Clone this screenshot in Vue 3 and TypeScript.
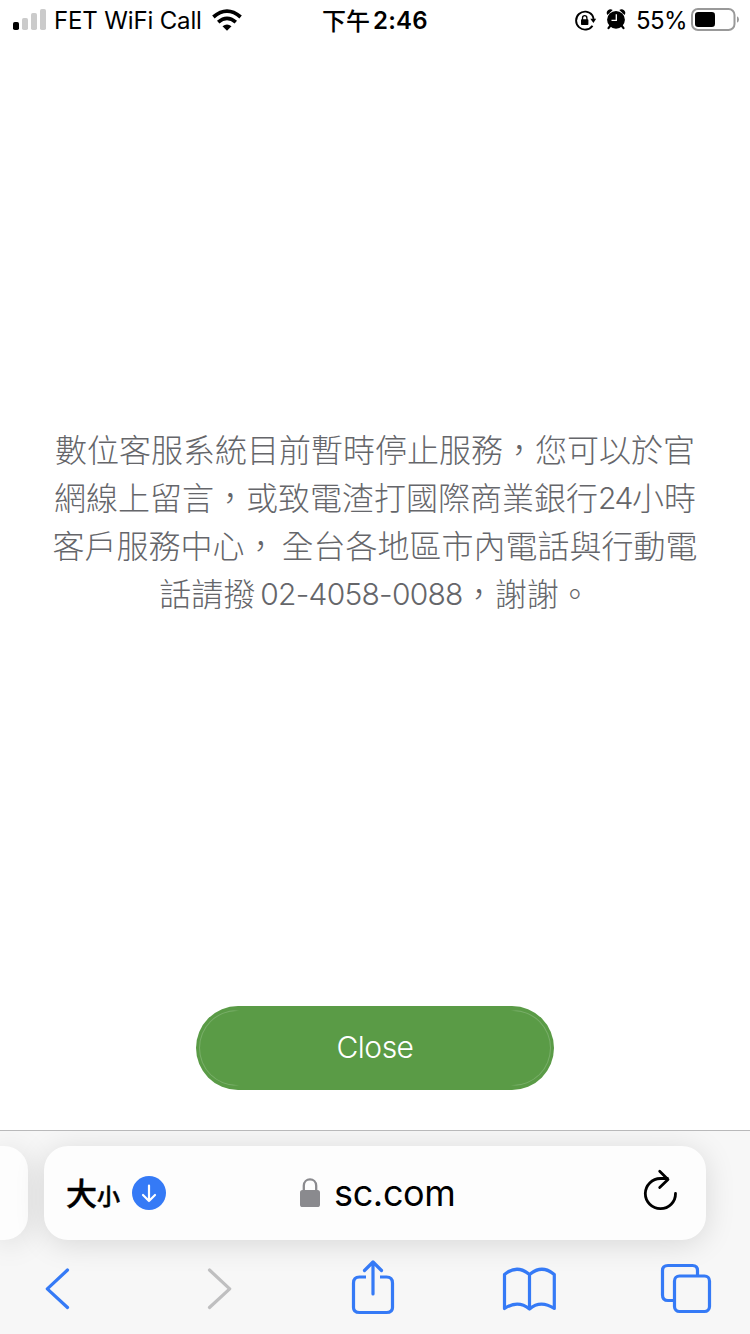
<script setup lang="ts">
interface Run {
  text: string
  kind?: 'number' | 'phone' | 'gap'
}

const message: Run[][] = [
  [{ text: '數位客服系統目前暫時停止服務，您可以於官' }],
  [{ text: '網線上留言，或致電渣打國際商業銀行' }, { text: '24', kind: 'number' }, { text: '小時' }],
  [{ text: '客戶服務中心，' }, { text: ' ', kind: 'gap' }, { text: '全台各地區市內電話與行動電' }],
  [{ text: '話請撥' }, { text: ' ', kind: 'gap' }, { text: '02-4058-0088', kind: 'phone' }, { text: '，謝謝。' }],
]
</script>

<template>
  <div class="screen">
    <header class="status">
      <div class="carrier">
        <svg class="signal" width="34" height="22" viewBox="13 9 34 22">
          <rect x="13" y="22" width="6" height="8" rx="1.8" />
          <g fill="#cbcbcb">
            <rect x="22" y="18" width="6" height="12" rx="1.8" />
            <rect x="31" y="13" width="6" height="17" rx="1.8" />
            <rect x="40" y="9" width="6" height="21" rx="1.8" />
          </g>
        </svg>
        <span class="network">FET WiFi Call</span>
        <svg class="wifi" width="30" height="22" viewBox="212 9 30 22">
          <g fill="none" stroke="#000" stroke-width="3.700">
            <path d="M213.400 17Q227 5.200 240.600 17" />
            <path d="M218.200 22.200Q227 14.600 235.800 22.200" />
          </g>
          <path d="M222.500 26.300Q227 22.700 231.500 26.300L227 30.800Z" />
        </svg>
      </div>
      <div class="clock"><span class="cjk">下午</span><span class="time">2:46</span></div>
      <div class="power">
        <svg width="52" height="26" viewBox="574 7 52 26">
          <path d="M592.300 15.200A9 9 0 1 0 592.500 25.700M592.300 15.200A9 9 0 0 1 593.600 20" fill="none" stroke="#000" stroke-width="1.900" />
          <path d="M590.300 18.700H596.200L593.400 23Z" />
          <rect x="581" y="19.300" width="7.400" height="5.700" rx=".8" />
          <path d="M582.500 20v-2.100a2.200 2.200 0 0 1 4.400 0V20" fill="none" stroke="#000" stroke-width="1.300" />
          <circle cx="616" cy="19.800" r="8.900" />
          <path d="M607.400 15a3.700 3.700 0 0 1 5.300-5zM624.600 15a3.700 3.700 0 0 0-5.300-5z" />
          <path d="m610.500 25.500-2 2.600m13-2.600 2 2.600" stroke="#000" stroke-width="2.200" stroke-linecap="round" />
          <path d="M616.300 14.300v6h-4.800" fill="none" stroke="#fff" stroke-width="1.300" />
        </svg>
        <span class="percent">55%</span>
        <svg width="50" height="26" viewBox="690 7 50 26">
          <rect x="692" y="9" width="42.500" height="21" rx="6" fill="none" stroke="#999" stroke-width="2" />
          <rect x="695" y="12" width="20" height="15" rx="3.200" />
          <path d="M737 16.200q2 1 2 3.300t-2 3.300z" fill="#999" />
        </svg>
      </div>
    </header>

    <main class="page">
      <p class="message">
        <span v-for="(line, i) in message" :key="i" class="line">
          <span v-for="(run, j) in line" :key="j" :class="run.kind">{{ run.text }}</span>
        </span>
      </p>
      <button class="close" type="button"><span>Close</span></button>
    </main>

    <footer class="browser">
      <div class="tabs">
        <div class="previous"></div>
        <div class="address">
          <span class="size"><span>大</span><small>小</small></span>
          <svg class="download" width="34" height="34" viewBox="0 0 34 34">
            <circle cx="17" cy="17" r="17" fill="#357af6" />
            <path d="M17 9.500V25m-6-6 6 6 6-6" fill="none" stroke="#fff" stroke-width="2.200" stroke-linecap="round" stroke-linejoin="round" />
          </svg>
          <svg class="lock" width="20" height="30" viewBox="300 1178 20 30">
            <rect x="300" y="1190" width="20" height="17" rx="2.600" fill="#8a8a8e" />
            <path d="M303.800 1191v-5.200c0-8.500 12.400-8.500 12.400 0v5.200" fill="none" stroke="#8a8a8e" stroke-width="2.300" />
          </svg>
          <span class="domain">sc.com</span>
          <svg class="reload" width="36" height="42" viewBox="643 1169 36 42">
            <path d="M675.500 1193.400A15.100 15.100 0 1 1 660.500 1178.500H667.500M659.700 1171.300 668 1179.400 659.700 1187.500" fill="none" stroke="#000" stroke-width="2.800" stroke-linecap="round" stroke-linejoin="round" />
          </svg>
        </div>
      </div>
      <nav class="tools">
        <svg viewBox="30 1258 60 60"><path d="M67.500 1270 47.300 1288.800 67.500 1307.500" /></svg>
        <svg class="disabled" viewBox="190 1258 60 60"><path d="M209.500 1270 229.700 1288.800 209.500 1307.500" /></svg>
        <svg viewBox="343 1258 60 60">
          <path d="M366 1277h-6.500q-6 0-6 6v24.500q0 5 6 5h27q6 0 6-5V1283q0-6-6-6H380" stroke-linecap="butt" />
          <path d="M373 1294v-32m-8.500 8.500 8.500-8.500 8.500 8.500" />
        </svg>
        <svg viewBox="500 1258 60 60">
          <path d="M504.500 1308.500v-34Q517 1264 529.500 1274.500Q542 1264 554.300 1274.500V1308.500Q540.500 1299.500 529.500 1309Q518 1299.500 504.500 1308.500ZM529.500 1274.500V1309" />
        </svg>
        <svg viewBox="656 1258 60 60">
          <path d="M674 1300.500h-6q-5.500 0-5.500-5.500v-24.500q0-5 5.500-5h24.500q5 0 5 5v6" stroke-linecap="butt" />
          <rect x="674.500" y="1276" width="35" height="35.500" rx="5" />
        </svg>
      </nav>
    </footer>
  </div>
</template>

<style>
body {
  margin: 0;
  background: #fff;
}
</style>

<style scoped>
.screen {
  width: 750px;
  height: 1334px;
  display: flex;
  flex-direction: column;
  overflow: hidden;
  background: #fff;
  color: #000;
  font-family: Inter, "Liberation Sans", "Noto Sans CJK TC", sans-serif;
}
svg {
  display: block;
  flex: none;
}
.status {
  height: 40px;
  display: grid;
  grid-template-columns: 322px 252px 1fr;
  align-items: center;
  white-space: nowrap;
}
.carrier,
.clock,
.power {
  display: flex;
  align-items: center;
  height: 40px;
}
.carrier {
  padding-left: 13px;
}
.network {
  width: 150px;
  margin: 1px 8px 0 7px;
  font-size: 24px;
  letter-spacing: -0.15px;
}
.clock {
  font-weight: 600;
  font-size: 24px;
}
.cjk {
  width: 51px;
  margin-top: -2px;
  font-family: "Noto Sans CJK TC", sans-serif;
  font-weight: 500;
}
.time {
  letter-spacing: 0.2px;
}
.percent {
  width: 50px;
  margin: 1px 4px 0 10px;
  font-size: 24px;
  letter-spacing: -0.6px;
}
.page {
  height: 1090px;
  display: flex;
  flex-direction: column;
  align-items: center;
  justify-content: space-between;
  padding: 384px 0 40px;
  box-sizing: border-box;
}
.message {
  margin: 0;
  color: #65666a;
  font-family: "Noto Sans CJK TC", sans-serif;
  font-weight: 300;
  font-size: 32px;
  line-height: 48px;
}
.line {
  display: flex;
  justify-content: center;
  height: 48px;
  white-space: pre;
}
.number,
.phone {
  padding-top: 2px;
  font-family: Inter, "Liberation Sans", sans-serif;
  font-size: 30px;
}
.number {
  letter-spacing: -1.3px;
}
.phone {
  letter-spacing: -0.75px;
}
.gap {
  width: 5px;
}
.close {
  width: 358px;
  height: 84px;
  padding: 3px;
  border: 0;
  border-radius: 42px;
  background: #5a9b46;
  color: #fff;
  font-family: Inter, "Liberation Sans", sans-serif;
  font-weight: 300;
  font-size: 30px;
  letter-spacing: -0.5px;
}
.close span {
  display: flex;
  align-items: center;
  justify-content: center;
  height: 76px;
  padding-bottom: 2px;
  box-sizing: border-box;
  border: 1px solid transparent;
  border-radius: 38px;
  background:
    linear-gradient(#5a9b46, #5a9b46) padding-box,
    linear-gradient(90deg, #79ae69 0 34px, #5a9b46 40px calc(100% - 40px), #79ae69 calc(100% - 34px)) border-box;
}
.browser {
  flex: 1;
  box-sizing: border-box;
  border-top: 1px solid #b9b9ba;
  background: #f7f7f7;
  overflow: hidden;
}
.tabs {
  display: flex;
  gap: 16px;
  padding-top: 15px;
}
.previous,
.address {
  height: 94px;
  background: #fdfdfd;
  box-shadow: 0 4px 30px rgba(0, 0, 0, 0.13);
}
.previous {
  width: 28px;
  border-radius: 0 24px 24px 0;
}
.address {
  width: 662px;
  box-sizing: border-box;
  display: flex;
  align-items: center;
  padding: 0 27px 0 22px;
  border-radius: 24px;
}
.size {
  display: flex;
  align-items: baseline;
  width: 66px;
  font-family: "Noto Sans CJK TC", sans-serif;
  font-weight: 500;
  font-size: 31px;
  line-height: 40px;
  -webkit-text-stroke: 0.5px #000;
}
.size small {
  font-size: 23px;
}
.lock {
  margin-left: 134px;
}
.domain {
  margin-left: 14px;
  font-size: 36px;
  letter-spacing: -0.35px;
}
.reload {
  margin: -6px 0 0 auto;
}
.tools {
  display: grid;
  grid-template-columns: 160px 153px 157px 156px 60px;
  padding: 18px 0 0 30px;
}
.tools svg {
  width: 60px;
  height: 60px;
  fill: none;
  stroke: #357af6;
  stroke-width: 3.2;
  stroke-linecap: round;
  stroke-linejoin: round;
}
.tools .disabled {
  stroke: #bfbfc0;
}
</style>
